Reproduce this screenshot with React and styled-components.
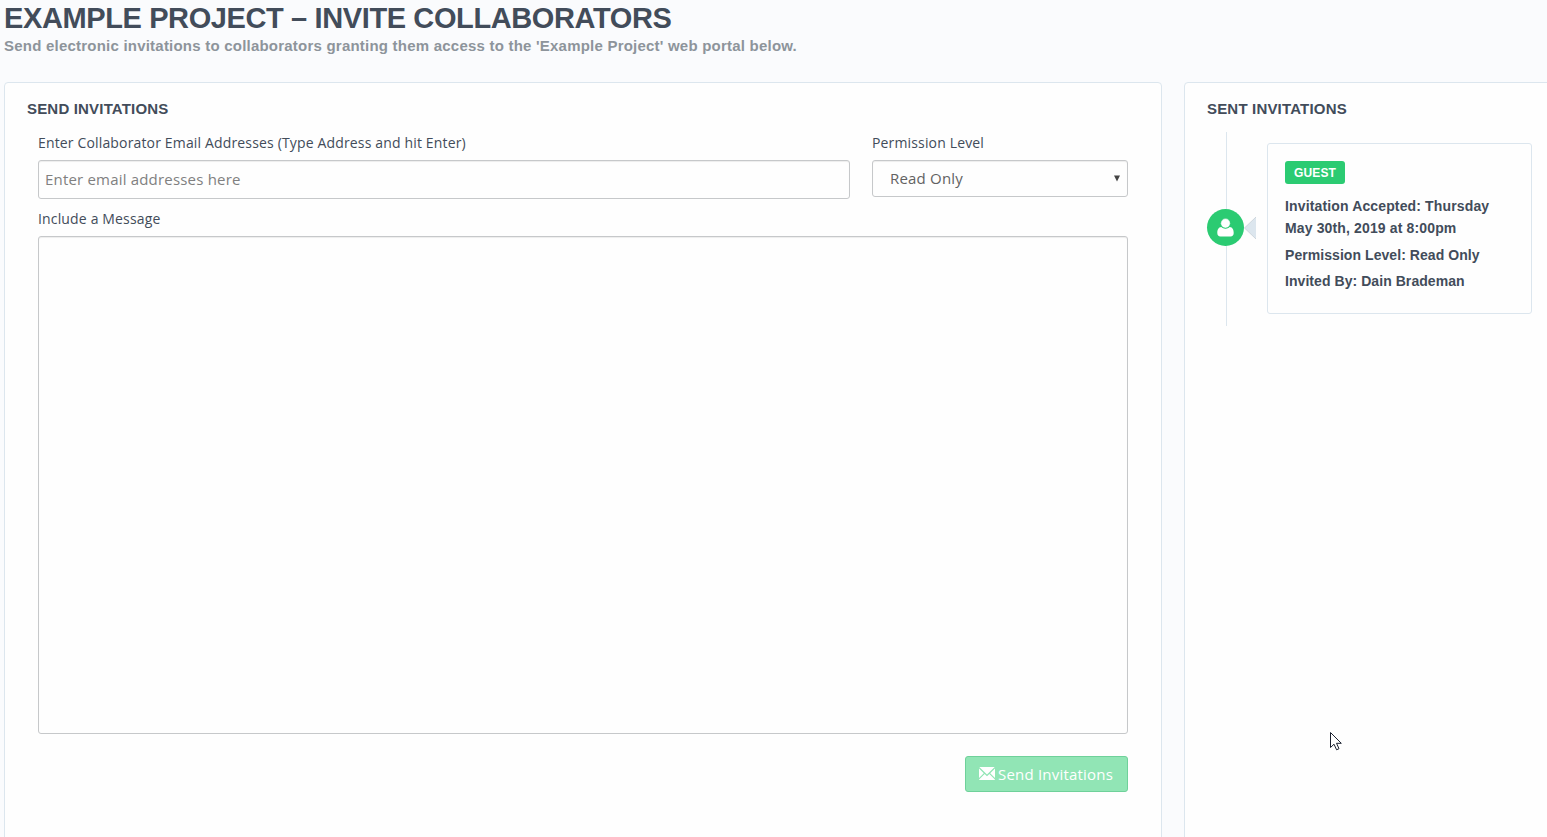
import React from 'react';
import styled, { createGlobalStyle } from 'styled-components';

const GlobalStyle = createGlobalStyle`
  *, *::before, *::after { box-sizing: border-box; }
  html, body { margin: 0; height: 100%; overflow: hidden; }
  body {
    background: #fafbfd;
    color: #424c5a;
    font-family: 'Open Sans', 'Liberation Sans', sans-serif;
    font-size: 14px;
  }
  h1, h2, p { margin: 0; }
`;

const heading = "'Liberation Sans', Arial, sans-serif";

const Page = styled.div`
  position: relative;
  display: flex;
  flex-direction: column;
  height: 837px;
  overflow: hidden;
`;

const PageHeader = styled.header`
  flex: 0 0 82px;
  padding-left: 4px;
  font-family: ${heading};
  white-space: nowrap;
`;

const Title = styled.h1`
  font-size: 29px;
  line-height: 36px;
  letter-spacing: -0.385px;
  font-weight: 700;
`;

const Subtitle = styled.p`
  font-size: 15px;
  line-height: 20px;
  font-weight: 700;
  letter-spacing: 0.22px;
  color: #8d949b;
`;

const Columns = styled.main`
  display: grid;
  grid-template-columns: 1158px 385px;
  column-gap: 22px;
  flex: 1;
  padding-left: 4px;
`;

const Panel = styled.section`
  height: 790px;
  padding: 15px 33px 0 22px;
  border: 1px solid #dce6ee;
  border-radius: 4px;
  background: #fefefe;
`;

const PanelTitle = styled.h2`
  font-family: ${heading};
  font-size: 15px;
  line-height: 22px;
  font-weight: 700;
  letter-spacing: 0.18px;
  white-space: nowrap;
`;

const Form = styled.form`
  padding: 12px 0 0 11px;
`;

const FieldRow = styled.div`
  display: grid;
  grid-template-columns: 812px 256px;
  column-gap: 22px;
`;

const Label = styled.label`
  display: block;
  height: 28px;
  padding-top: 1px;
  line-height: 20px;
  letter-spacing: 0.155px;
  white-space: nowrap;
`;

const MessageLabel = styled(Label)`
  height: 27px;
  margin-top: 10px;
  padding-top: 0;
`;

const controlStyle = `
  border: 1px solid #c6c8ca;
  border-radius: 3px;
  background: #fefefe;
  box-shadow: inset 0 1px 1px rgba(0, 0, 0, 0.07);
  outline: none;
`;

const EmailInput = styled.input`
  display: block;
  width: 100%;
  height: 39px;
  padding: 0 6px 2px;
  font: 15px 'Open Sans', sans-serif;
  letter-spacing: 0.19px;
  ${controlStyle}
  &::placeholder { color: #808080; opacity: 1; }
`;

const SelectBox = styled.div`
  display: flex;
  align-items: center;
  justify-content: space-between;
  height: 37px;
  padding: 0 7px 2px 17px;
  font-size: 15px;
  letter-spacing: 0.2px;
  color: #626262;
  ${controlStyle}
`;

const SelectArrow = styled.svg`
  display: block;
  margin-top: 1px;
`;

const Message = styled.textarea`
  display: block;
  width: 1090px;
  height: 498px;
  resize: none;
  ${controlStyle}
`;

const Actions = styled.div`
  display: flex;
  justify-content: flex-end;
  padding-top: 22px;
`;

const SendButton = styled.button`
  display: flex;
  align-items: center;
  gap: 3px;
  width: 163px;
  height: 36px;
  padding: 0 0 0 13px;
  border: 1px solid #6fd19a;
  border-radius: 3px;
  background: #91e5b5;
  color: #fff;
  font: 15px 'Open Sans', sans-serif;
  letter-spacing: 0.2px;
  white-space: nowrap;
`;

const Envelope = styled.svg`
  display: block;
  margin-bottom: 2px;
`;

const TimelineItem = styled.div`
  position: relative;
  display: flex;
  align-items: center;
  width: 325px;
  height: 194px;
  margin-top: 12px;
  &::before {
    content: '';
    position: absolute;
    left: 19px;
    top: 0;
    bottom: 0;
    width: 1px;
    background: #dce6ee;
  }
`;

const Avatar = styled.div`
  position: relative;
  display: grid;
  place-items: center;
  width: 37px;
  height: 37px;
  margin-top: -3px;
  border-radius: 50%;
  background: #2bcb72;
`;

const Pointer = styled.svg`
  display: block;
  margin: -2px 11px 0 0;
`;

const InviteCard = styled.article`
  width: 265px;
  height: 171px;
  margin-top: -1px;
  padding: 17px 17px 0;
  border: 1px solid #dce6ee;
  border-radius: 3px;
  font-family: ${heading};
  font-size: 14px;
  font-weight: 700;
`;

const Badge = styled.span`
  display: block;
  width: 60px;
  height: 23px;
  margin-bottom: 11px;
  border-radius: 3px;
  background: #2bcb72;
  color: #fff;
  font-size: 12px;
  line-height: 24px;
  letter-spacing: 0.15px;
  text-align: center;
`;

const Detail = styled.p`
  margin-bottom: ${(p) => (p.$lead ? '5px' : '4px')};
  line-height: 22px;
  letter-spacing: ${(p) => (p.$lead ? '0.14px' : '0.06px')};
  white-space: nowrap;
`;

const Cursor = styled.svg`
  position: absolute;
  left: 1329px;
  top: 731px;
`;

export default function App() {
  return (
    <Page>
      <GlobalStyle />
      <PageHeader>
        <Title>EXAMPLE PROJECT – INVITE COLLABORATORS</Title>
        <Subtitle>Send electronic invitations to collaborators granting them access to the 'Example Project' web portal below.</Subtitle>
      </PageHeader>
      <Columns>
        <Panel>
          <PanelTitle>SEND INVITATIONS</PanelTitle>
          <Form onSubmit={(e) => e.preventDefault()}>
            <FieldRow>
              <div>
                <Label htmlFor="emails">Enter Collaborator Email Addresses (Type Address and hit Enter)</Label>
                <EmailInput id="emails" placeholder="Enter email addresses here" />
              </div>
              <div>
                <Label>Permission Level</Label>
                <SelectBox role="combobox">
                  <span>Read Only</span>
                  <SelectArrow width="6" height="7" viewBox="0 0 6 7"><path d="M0 0.5H6L3 6.5Z" fill="#444" /></SelectArrow>
                </SelectBox>
              </div>
            </FieldRow>
            <MessageLabel htmlFor="message">Include a Message</MessageLabel>
            <Message id="message" />
            <Actions>
              <SendButton type="submit">
                <Envelope width="16" height="13" viewBox="0 0 16 13" fill="#fff">
                  <path d="M0.3 0H15.7L8 7.4ZM0 1.6L4.8 6.2L0 11ZM16 1.6V11L11.2 6.2ZM5.6 7L8 9.3L10.4 7L15.9 12.5V13H0.1V12.5Z" />
                </Envelope>
                <span>Send Invitations</span>
              </SendButton>
            </Actions>
          </Form>
        </Panel>
        <Panel>
          <PanelTitle>SENT INVITATIONS</PanelTitle>
          <TimelineItem>
            <Avatar>
              <svg width="17" height="19" viewBox="0 0 17 19" fill="#fff">
                <path d="M4.3 9C1.3 9.3 0.3 11.8 0.3 15C0.3 17.2 1.5 18.6 3.4 18.6H13.6C15.5 18.6 16.7 17.2 16.7 15C16.7 11.8 15.7 9.3 12.7 9C10.4 11.2 6.6 11.2 4.3 9Z" />
                <circle cx="8.5" cy="5.3" r="4.7" stroke="#2bcb72" strokeWidth="0.4" />
              </svg>
            </Avatar>
            <Pointer width="12" height="22" viewBox="0 0 12 22">
              <path d="M12 0V22L0.5 11Z" fill="#dce6ee" />
              <path d="M12 0L0.5 11L12 22" fill="none" stroke="#ced6dc" />
            </Pointer>
            <InviteCard>
              <Badge>GUEST</Badge>
              <Detail $lead>Invitation Accepted: Thursday<br />May 30th, 2019 at 8:00pm</Detail>
              <Detail>Permission Level: Read Only</Detail>
              <Detail>Invited By: Dain Brademan</Detail>
            </InviteCard>
          </TimelineItem>
        </Panel>
      </Columns>
      <Cursor width="14" height="21" viewBox="0 0 14 21">
        <path d="M1.5 1.5V16.5L5 13.2L7.6 18.8L10 17.7L7.5 12.3H12.3Z" fill="#fff" stroke="#1c2230" />
      </Cursor>
    </Page>
  );
}
